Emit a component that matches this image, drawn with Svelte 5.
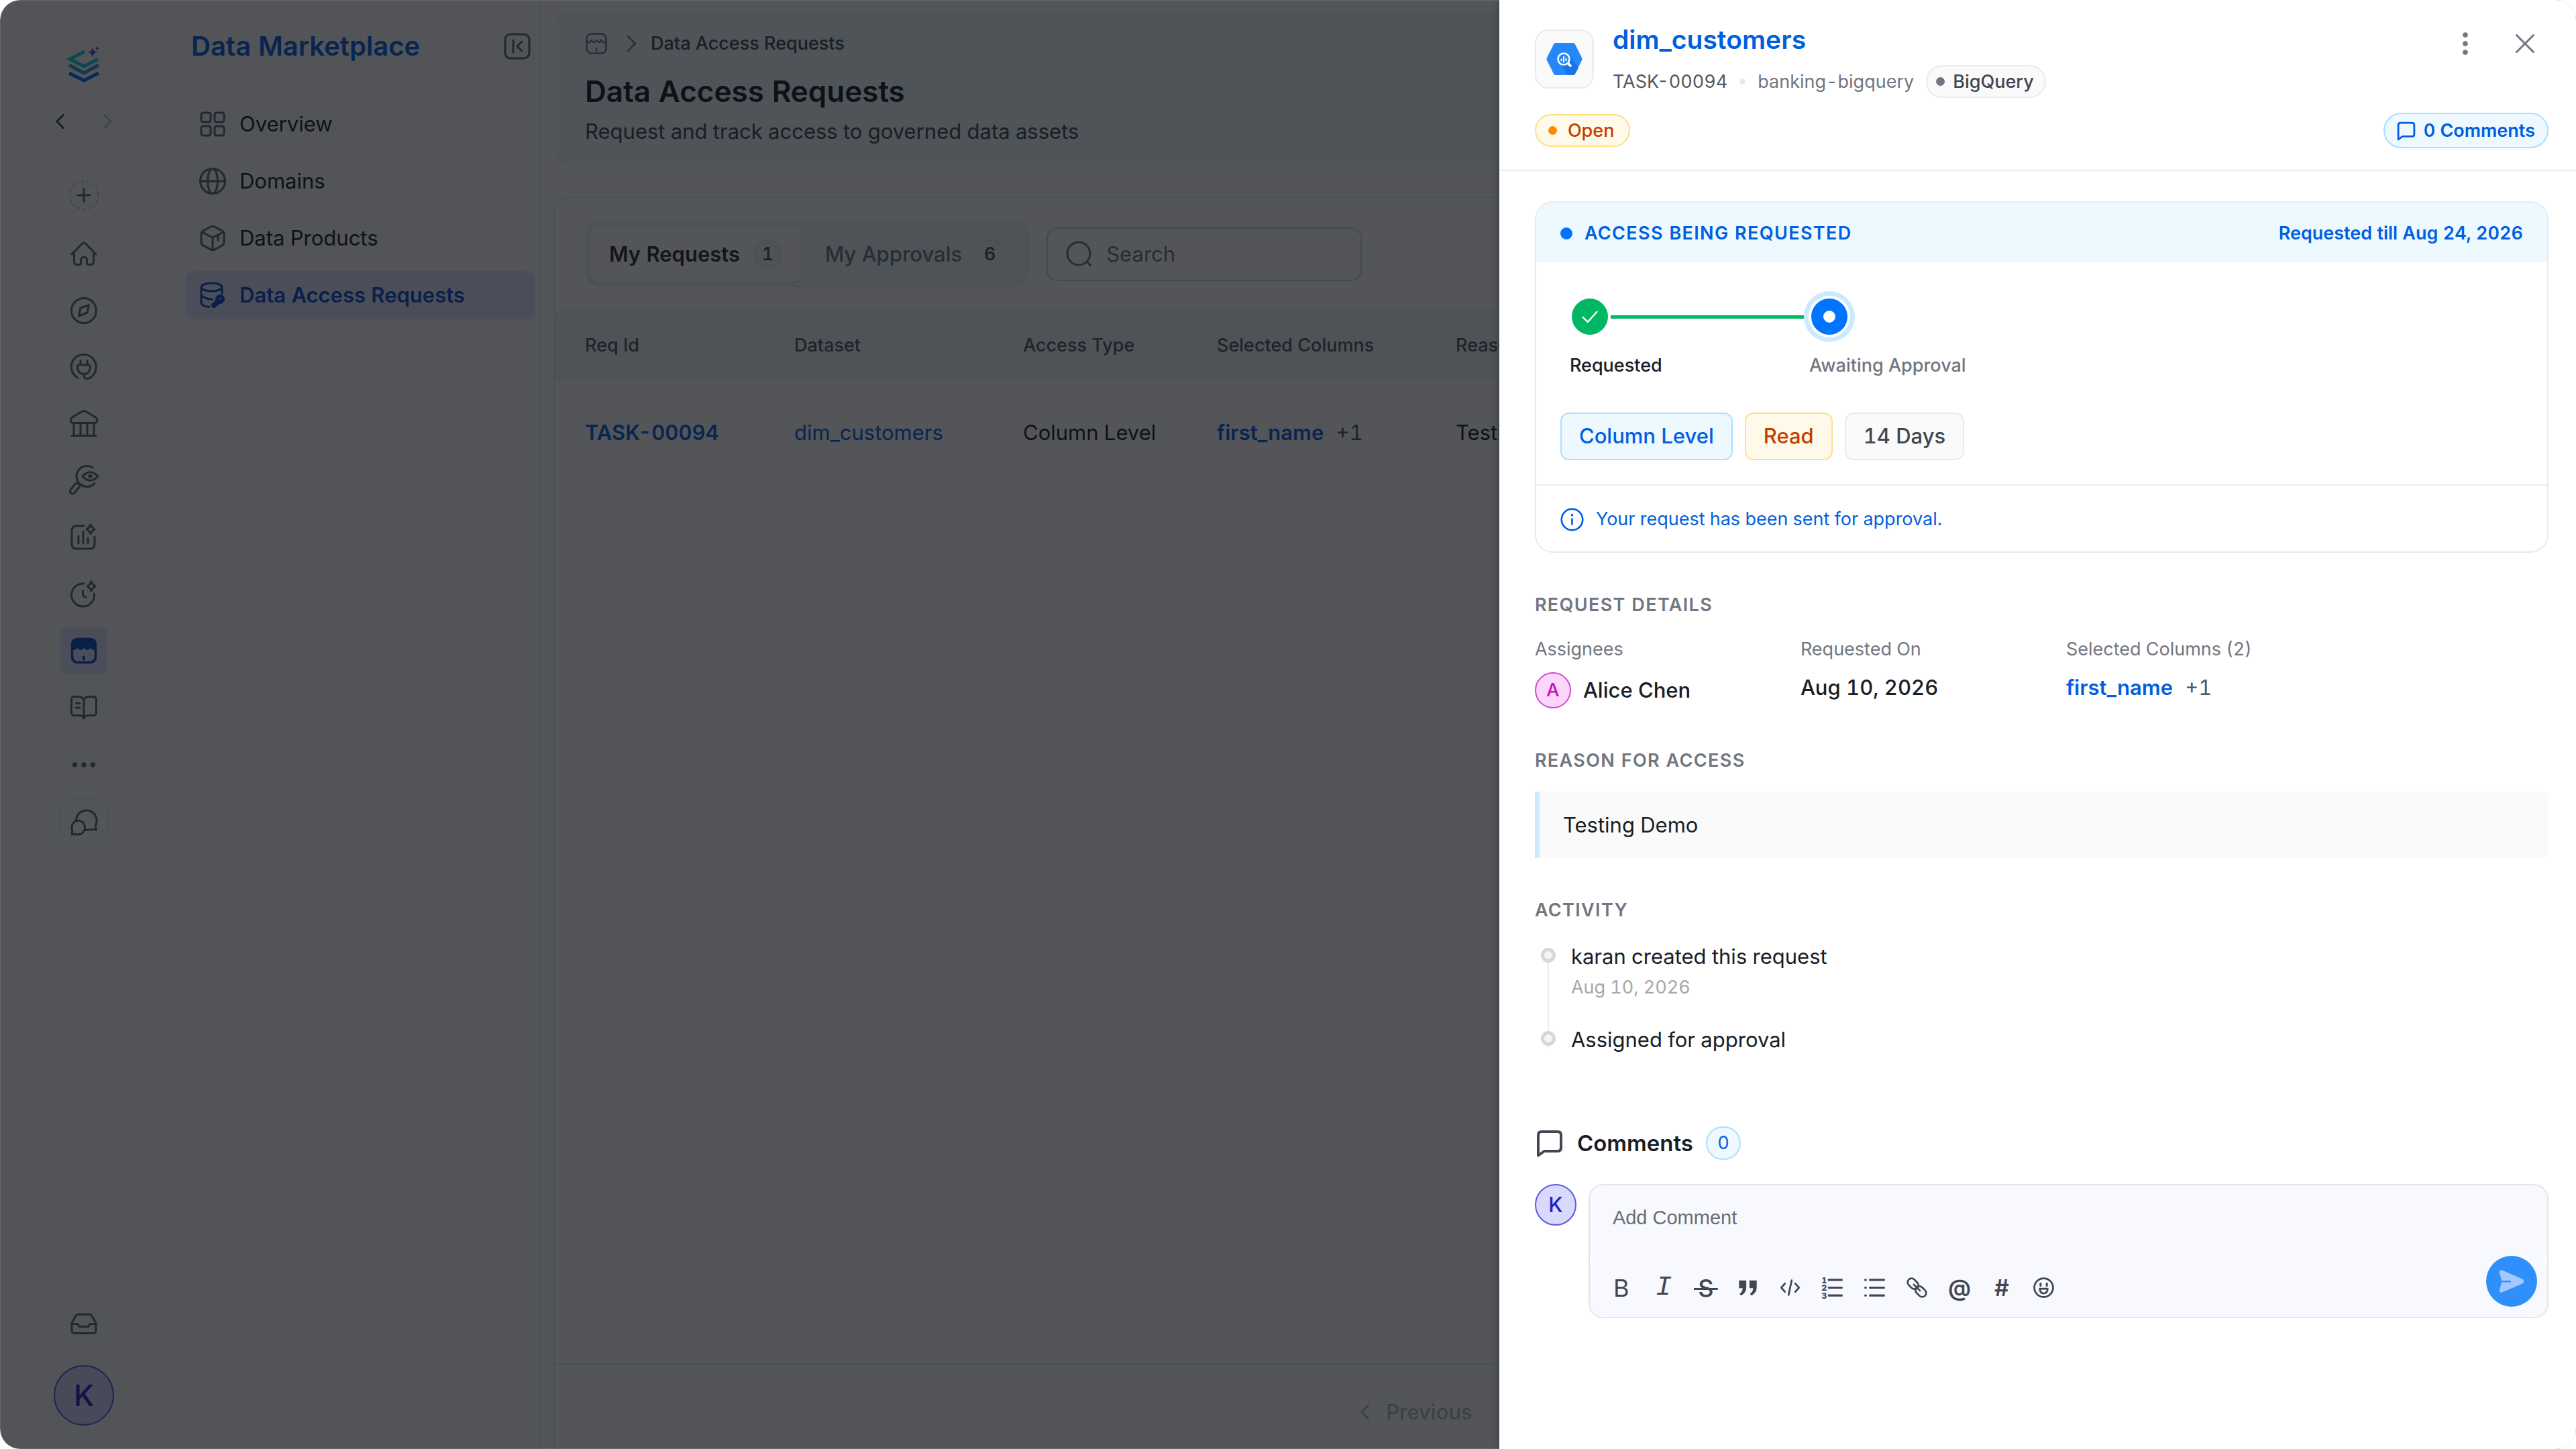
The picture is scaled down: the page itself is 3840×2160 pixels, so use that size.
<script lang="ts">
  type RailItem = { icon: string; label: string };

  const star = (x: number, y: number) =>
    `<path d="M${x} ${y - 7} Q${x + 2} ${y - 2} ${x + 6} ${y} Q${x + 2} ${y + 2} ${x} ${y + 7} Q${x - 2} ${y + 2} ${x - 6} ${y} Q${x - 2} ${y - 2} ${x} ${y - 7} Z"/>`;

  // every icon is drawn on a 40 x 40 grid
  const icons: Record<string, string> = {
    back: `<path d="M26 7 13 20 26 33"/>`,
    forward: `<path d="M14 7 27 20 14 33"/>`,
    plus: `<circle cx="20" cy="20" r="21" stroke-dasharray="2 6" stroke-width="2" opacity=".35"/><path d="M20 11 V29 M11 20 H29"/>`,
    home: `<path d="M2 20 L17 4.5 Q20 1.5 23 4.5 L38 20 M5.5 17 V31 Q5.5 35.5 10 35.5 H13 Q15.5 35.5 15.5 33 V28.5 a4.5 4.5 0 0 1 9 0 V33 Q24.5 35.5 27 35.5 H30 Q34.5 35.5 34.5 31 V17"/>`,
    compass: `<circle cx="20" cy="20" r="18.5"/><path d="M27.5 12 25 23 12.5 28 15 16 Z"/>`,
    plug: `<path d="M11 36.2 A18.5 18.5 0 1 1 27.5 36.8 Q20 40 20 31"/><path d="M15 10.5 V16 M25 10.5 V16 M14 17 H26 Q29.5 17 29.5 20 Q29 30.5 20 30.5 Q11 30.5 10.5 20 Q10.5 17 14 17 Z"/>`,
    bank: `<path d="M17.5 2.2 Q20 .8 22.5 2.2 L36.5 10.5 Q40.5 13 39.8 16.5 Q39 19.5 36 19.5 H4 Q1 19.5 .2 16.5 Q-.5 13 3.5 10.5 Z M5 20 V38 M15 20 V38 M25 20 V38 M35 20 V38 M2 38.5 H38"/>`,
    insights: `<path d="M36 25.5 A15.5 15.5 0 1 1 33 2"/><path d="M18 15 Q29.5 2.5 41 15 Q29.5 27.5 18 15 Z"/><circle cx="29.5" cy="15" r="1.5"/><rect x="3" y="24.5" width="7.5" height="18" rx="3.5" transform="rotate(40 7 33)"/>`,
    chart: `<path d="M20 4 H9 Q2 4 2 11 V31 Q2 38 9 38 H29 Q36 38 36 31 V20 M12 19 V30 M19 12 V30 M26 22 V30"/>${star(30, 9)}`,
    clock: `<path d="M20 5 A17 17 0 1 0 35.5 20 M18.5 15.5 V21 Q18.5 24 23 25.5"/>${star(31, 9)}`,
    market: `<path d="M1 18 V12 Q1 1 12 1 H28 Q39 1 39 12 V18 Q33 20.5 29.5 16 Q25 22 20 16 Q15 22 10.5 16 Q7 20.5 1 18 Z" fill="currentColor" stroke="none"/><path d="M2.5 12 Q2.5 2.5 12 2.5 H28 Q37.5 2.5 37.5 12 V28 Q37.5 37.5 28 37.5 H12 Q2.5 37.5 2.5 28 Z M20 29 V33" stroke-width="3.5"/>`,
    store: `<rect x="3" y="3" width="34" height="34" rx="8"/><path d="M3 16 Q8 21 11.5 14 Q15.5 21 20 14 Q24.5 21 28.5 14 Q32 21 37 16 M20 28 V33"/>`,
    book: `<path d="M20 8 Q17.5 3.5 12 3.5 H6 Q1.5 3.5 1.5 8 V27 Q1.5 31.5 6 31.5 H13 Q18.5 31.5 20 36 Q21.5 31.5 27 31.5 H34 Q38.5 31.5 38.5 27 V8 Q38.5 3.5 34 3.5 H28 Q22.5 3.5 20 8 V36 M8.5 13.5 H14 M8.5 20 H14"/>`,
    more: `<g fill="currentColor" stroke="none"><circle cx="6.5" cy="20" r="3.7"/><circle cx="20" cy="20" r="3.7"/><circle cx="33.5" cy="20" r="3.7"/></g>`,
    chat: `<path d="M8.5 18 A15.3 15.3 0 1 1 38 24 Q37 28 38.5 32.5 Q35 30.8 31 31.8 L22 32.5"/><path d="M2 39 Q3.2 36 2.2 31 A9.8 10.5 0 1 1 16 38 Q12 39.5 8 38.5 Z"/>`,
    inbox: `<path d="M11 6.5 H29 Q31 6.5 32 8.5 L38 19 V30 Q38 34.5 33.5 34.5 H6.5 Q2 34.5 2 30 V19 L8 8.5 Q9 6.5 11 6.5 Z M2.5 20.5 H9 Q12 20.5 13 24.5 H27 Q28 20.5 31 20.5 H37.5"/>`,
    collapse: `<rect x="2" y="2" width="36" height="36" rx="8"/><path d="M14 11 V29 M27 13 20 20 27 27"/>`,
    overview: `<rect x="3" y="3" width="14" height="14" rx="3"/><rect x="23" y="3" width="14" height="14" rx="3"/><rect x="3" y="23" width="14" height="14" rx="3"/><rect x="23" y="23" width="14" height="14" rx="3"/>`,
    globe: `<circle cx="20" cy="20" r="18.5"/><ellipse cx="20" cy="20" rx="7.5" ry="18.5"/><path d="M1.5 20 H38.5"/>`,
    cube: `<path d="M17.5 2.8 Q20 1.5 22.5 2.8 L34 9 Q37 10.8 37 14 V26 Q37 29.2 34 31 L22.5 37.2 Q20 38.5 17.5 37.2 L6 31 Q3 29.2 3 26 V14 Q3 10.8 6 9 Z M4 11 20 19 36 11 M20 19 V38 M28 15 V23"/>`,
    dbkey: `<ellipse cx="18.5" cy="8" rx="15.5" ry="6"/><path d="M3 8 V32 Q5 37 15 37.5 M34 8 V18 M3 20 Q8 26 19 26"/><path d="M22 35 29 29" stroke-width="8"/><circle cx="31" cy="26" r="4.5" stroke-width="5"/>`,
    search: `<circle cx="19" cy="19" r="17"/><path d="M31 31 37 37"/>`,
    dots: `<g fill="currentColor" stroke="none"><circle cx="20" cy="7" r="3.8"/><circle cx="20" cy="20" r="3.8"/><circle cx="20" cy="33" r="3.8"/></g>`,
    close: `<path d="M7.5 7.5 32.5 32.5 M32.5 7.5 7.5 32.5"/>`,
    comment: `<path d="M3 8 Q3 3 8 3 H32 Q37 3 37 8 V27 Q37 32 32 32 H12 L3 38.5 Z"/>`,
    check: `<path d="M7 21 16 30 33 11"/>`,
    info: `<circle cx="20" cy="20" r="18"/><path d="M20 19 V28"/><path d="M20 12 V12.5" stroke-width="4"/>`,
    quote: `<g fill="currentColor" stroke="none"><path d="M3 6 H17 V20 Q17 30 7 35 L4 32 Q10 28 10 21 H3 Z"/><path d="M23 6 H37 V20 Q37 30 27 35 L24 32 Q30 28 30 21 H23 Z"/></g>`,
    code: `<path d="M10 12 3 20 10 28 M30 12 37 20 30 28 M23 6 17 34"/>`,
    bullets: `<path d="M11 5 H38 M11 20 H38 M11 35 H38" stroke-width="4"/><path d="M2 5 H3 M2 20 H3 M2 35 H3" stroke-width="4"/>`,
    link: `<rect x="5" y="1" width="15" height="23" rx="7.5" transform="rotate(-45 12.5 12.5)"/><rect x="20" y="16" width="15" height="23" rx="7.5" transform="rotate(-45 27.5 27.5)"/><path d="M14 14 26 26"/>`,
    smile: `<circle cx="20" cy="20" r="18"/><path d="M14 12 V16 M26 12 V16" stroke-width="4"/><path d="M12.5 22 H27.5 Q27 31 20 31 Q13 31 12.5 22 Z"/>`,
  };

  const railTop: RailItem[] = [
    { icon: "home", label: "Home" },
    { icon: "compass", label: "Discover" },
    { icon: "plug", label: "Connections" },
    { icon: "bank", label: "Governance" },
  ];

  const railBottom: RailItem[] = [
    { icon: "insights", label: "Observability" },
    { icon: "chart", label: "Reports" },
    { icon: "clock", label: "Automations" },
    { icon: "market", label: "Marketplace" },
    { icon: "book", label: "Glossary" },
    { icon: "more", label: "More" },
    { icon: "chat", label: "Chat" },
  ];

  const navItems = [
    { icon: "overview", label: "Overview" },
    { icon: "globe", label: "Domains" },
    { icon: "cube", label: "Data Products" },
    { icon: "dbkey", label: "Data Access Requests" },
  ];

  const columns = ["Req Id", "Dataset", "Access Type", "Selected Columns", "Reason"];

  const activity = [
    { text: "karan created this request", date: "Aug 10, 2026" },
    { text: "Assigned for approval", date: "" },
  ];

  let search = $state("");
  let comment = $state("");
  let activePage = $state("Data Access Requests");
</script>

{#snippet icon(name: string)}
  <svg class="icon" viewBox="0 0 40 40" aria-hidden="true">{@html icons[name]}</svg>
{/snippet}

<div class="app">
  <aside class="rail">
    <svg class="logo" viewBox="0 0 50 54" aria-hidden="true">
      <path d="M26 8 4 19 25 30 46 19" stroke="#10d5e0" />
      <path d="M3 28 25 40 47 28" stroke="#2f9fdc" />
      <path d="M3 40 25 51 47 40" stroke="#006bf0" />
      <path d="M38 1 Q39 8 45 9 Q39 10 38 17 Q37 10 31 9 Q37 8 38 1 Z" fill="#2f5fd8" />
      <path d="M45 0 46 2 48 3 46 4 45 6 44 4 42 3 44 2 Z" fill="#4b3fc8" />
    </svg>
    <div class="history">
      <button aria-label="Back">{@render icon("back")}</button>
      <button aria-label="Forward" disabled>{@render icon("forward")}</button>
    </div>
    <button class="rail-item add" aria-label="Create">{@render icon("plus")}</button>
    <nav class="rail-group">
      {#each railTop as item}
        <a class="rail-item" href="#{item.icon}" aria-label={item.label}>{@render icon(item.icon)}</a>
      {/each}
    </nav>
    <nav class="rail-group lower">
      {#each railBottom as item}
        <a
          class="rail-item"
          class:active={item.icon === "market"}
          class:boxed={item.icon === "chat"}
          href="#{item.icon}"
          aria-label={item.label}>{@render icon(item.icon)}</a
        >
      {/each}
    </nav>
    <a class="rail-item inbox" href="#inbox" aria-label="Inbox">{@render icon("inbox")}</a>
    <button class="avatar large">K</button>
  </aside>

  <aside class="sidebar">
    <div class="sidebar-head">
      <h2>Data Marketplace</h2>
      <button aria-label="Collapse">{@render icon("collapse")}</button>
    </div>
    <nav>
      {#each navItems as item}
        <a
          href="#{item.icon}"
          class:active={activePage === item.label}
          onclick={() => (activePage = item.label)}
        >
          {@render icon(item.icon)}
          {item.label}
        </a>
      {/each}
    </nav>
  </aside>

  <main>
    <header class="page-head">
      <div class="crumbs">
        {@render icon("store")}
        <span class="sep">{@render icon("forward")}</span>
        <span>Data Access Requests</span>
      </div>
      <h1>Data Access Requests</h1>
      <p>Request and track access to governed data assets</p>
    </header>

    <section class="list-card">
      <div class="toolbar">
        <div class="tabs">
          <button class="tab active">My Requests <span class="count">1</span></button>
          <button class="tab">My Approvals <span class="count">6</span></button>
        </div>
        <label class="search">
          {@render icon("search")}
          <input type="text" placeholder="Search" aria-label="Search" bind:value={search} />
        </label>
      </div>

      <table>
        <thead>
          <tr>
            {#each columns as column}
              <th>{column}</th>
            {/each}
          </tr>
        </thead>
        <tbody>
          <tr>
            <td><a class="strong" href="#task">TASK-00094</a></td>
            <td><a href="#dataset">dim_customers</a></td>
            <td>Column Level</td>
            <td><a class="strong" href="#columns">first_name</a> <span class="extra">+1</span></td>
            <td>Testing Demo</td>
          </tr>
        </tbody>
      </table>

      <footer class="pager">
        <button disabled>{@render icon("back")} Previous</button>
      </footer>
    </section>
  </main>

  <div class="overlay"></div>

  <div class="drawer" role="dialog" aria-label="dim_customers">
    <header class="drawer-head">
      <div class="head-row">
        <div class="source">
          <svg viewBox="0 0 54 48" aria-hidden="true">
            <path d="M14 0 H40 Q42 0 43 2 L53 22 Q54 24 53 26 L43 46 Q42 48 40 48 H14 Q12 48 11 46 L1 26 Q0 24 1 22 L11 2 Q12 0 14 0 Z" fill="#2488fb" />
            <path d="M34 17 48 37 43 46 Q42 48 40 48 H32 L21 31 37 35 Z" fill="#1b74e4" />
            <circle cx="26" cy="24" r="8.5" fill="none" stroke="#fff" stroke-width="2.5" />
            <path d="M32 30 37 35" stroke="#fff" stroke-width="3.5" />
            <path d="M22.5 24 V27 M26 20 V29 M29.5 23 V27" stroke="#fff" stroke-width="2" />
          </svg>
        </div>
        <div class="head-text">
          <h2><a href="#dataset">dim_customers</a></h2>
          <div class="meta">
            <span class="task">TASK-00094</span>
            <i></i>
            <span>banking-bigquery</span>
            <span class="pill grey"><b></b>BigQuery</span>
          </div>
        </div>
        <div class="head-actions">
          <button aria-label="More actions">{@render icon("dots")}</button>
          <button aria-label="Close">{@render icon("close")}</button>
        </div>
      </div>
      <div class="status-row">
        <span class="pill amber"><b></b>Open</span>
        <button class="pill blue">{@render icon("comment")}0 Comments</button>
      </div>
    </header>

    <div class="drawer-body">
      <section class="access">
        <div class="access-head">
          <b></b>
          <h3>ACCESS BEING REQUESTED</h3>
          <span>Requested till Aug 24, 2026</span>
        </div>
        <div class="access-body">
          <ol class="steps">
            <li class="done">
              <div class="track"><span class="mark">{@render icon("check")}</span></div>
              Requested
            </li>
            <li>
              <div class="track"><span class="mark current"></span></div>
              Awaiting Approval
            </li>
          </ol>
          <div class="tags">
            <span class="tag blue">Column Level</span>
            <span class="tag amber">Read</span>
            <span class="tag grey">14 Days</span>
          </div>
        </div>
        <p class="note">{@render icon("info")} Your request has been sent for approval.</p>
      </section>

      <section class="block">
        <h3>REQUEST DETAILS</h3>
        <dl>
          <div>
            <dt>Assignees</dt>
            <dd><span class="avatar small">A</span>Alice Chen</dd>
          </div>
          <div>
            <dt>Requested On</dt>
            <dd>Aug 10, 2026</dd>
          </div>
          <div>
            <dt>Selected Columns (2)</dt>
            <dd><a class="strong" href="#columns">first_name</a><span class="extra">+1</span></dd>
          </div>
        </dl>
      </section>

      <section class="block">
        <h3>REASON FOR ACCESS</h3>
        <blockquote>Testing Demo</blockquote>
      </section>

      <section class="block">
        <h3>ACTIVITY</h3>
        <ul class="activity">
          {#each activity as entry}
            <li>
              <span class="dot"></span>
              <div>
                <p>{entry.text}</p>
                {#if entry.date}
                  <time>{entry.date}</time>
                {/if}
              </div>
            </li>
          {/each}
        </ul>
      </section>

      <section class="comments">
        <h2>{@render icon("comment")} Comments <span>0</span></h2>
        <div class="composer">
          <span class="avatar">K</span>
          <div class="editor">
            <textarea placeholder="Add Comment" aria-label="Add Comment" bind:value={comment}></textarea>
            <div class="tools">
              <button aria-label="Bold">B</button>
              <button class="italic" aria-label="Italic">I</button>
              <button class="strike" aria-label="Strikethrough"><s>&thinsp;S&thinsp;</s></button>
              <button aria-label="Quote">{@render icon("quote")}</button>
              <button aria-label="Code">{@render icon("code")}</button>
              <button aria-label="Numbered list">
                <svg class="icon" viewBox="0 0 40 40" aria-hidden="true">
                  <path d="M13 5 H38 M13 20 H38 M13 35 H38" stroke-width="4" />
                  <g class="digits"><text x="-1" y="11">1</text><text x="-1" y="26">2</text><text x="-1" y="41">3</text></g>
                </svg>
              </button>
              <button aria-label="Bulleted list">{@render icon("bullets")}</button>
              <button aria-label="Link">{@render icon("link")}</button>
              <button class="sign" aria-label="Mention">@</button>
              <button class="sign" aria-label="Tag">#</button>
              <button aria-label="Emoji">{@render icon("smile")}</button>
            </div>
            <button class="send" aria-label="Send">
              <svg viewBox="0 0 40 36" aria-hidden="true">
                <path d="M2 5 Q1 0 6 1.5 L36 14.5 Q41 18 36 21.5 L6 34.5 Q1 36 2 31 L5 19.5 H19 V17 H5 Z" fill="#a2c8ff" />
              </svg>
            </button>
          </div>
        </div>
      </section>
    </div>
  </div>
</div>

<style>
  :global(body) {
    background: #fff;
  }

  .app {
    --blue: #005fe0;
    --line: #e9eaeb;
    --grey: #717680;
    --text: #181d27;
    display: grid;
    grid-template-columns: 250px 557px 1fr;
    position: relative;
    min-height: 100vh;
    border-radius: 30px;
    overflow: hidden;
    background: #fff;
    color: var(--text);
    font: 400 31px/46px Inter, sans-serif;
    font-variant-numeric: tabular-nums;
  }

  .app *,
  .app *::before {
    box-sizing: border-box;
  }

  h1,
  h2,
  h3,
  p,
  ol,
  ul,
  dl,
  dd,
  blockquote {
    margin: 0;
    padding: 0;
    list-style: none;
  }

  button {
    display: flex;
    align-items: center;
    justify-content: center;
    padding: 0;
    border: 0;
    background: none;
    color: inherit;
    font: inherit;
    font-variant-numeric: inherit;
    cursor: pointer;
  }

  a {
    color: var(--blue);
    text-decoration: none;
  }

  .strong {
    font-weight: 600;
  }

  .extra {
    color: #535862;
    margin-left: 10px;
  }

  .icon {
    flex: none;
    width: 40px;
    height: 40px;
    overflow: visible;
    fill: none;
    stroke: currentColor;
    stroke-width: 3;
    stroke-linecap: round;
    stroke-linejoin: round;
  }

  /* Icon rail */
  .rail {
    display: flex;
    flex-direction: column;
    align-items: center;
    padding: 69px 0 35px;
    background: #fafafa;
    color: #5b6873;
  }

  .logo {
    width: 50px;
    height: 54px;
    fill: none;
    stroke-width: 5;
  }

  .history {
    display: flex;
    gap: 40px;
    margin: 42px 0 59px;
    color: #414651;
  }

  .history button {
    height: 32px;
  }

  .history .icon {
    width: 30px;
    height: 40px;
    stroke-width: 4;
  }

  .history button:disabled {
    color: #c4c8cc;
  }

  .rail-item {
    display: flex;
    align-items: center;
    justify-content: center;
    width: 70px;
    height: 70px;
    border-radius: 10px;
    color: inherit;
  }

  .add {
    margin-bottom: 18px;
  }

  .rail-group {
    display: flex;
    flex-direction: column;
    gap: 14px;
  }

  .lower {
    gap: 15px;
    margin-top: 14px;
  }

  .rail-item.active {
    background: #e3e8fb;
    color: #0a4bc8;
  }

  .boxed {
    border: 2px solid #ebf2f2;
    border-radius: 18px;
    background: #fff;
  }

  .inbox {
    margin-top: auto;
    margin-bottom: 27px;
  }

  .avatar {
    display: flex;
    flex: none;
    align-items: center;
    justify-content: center;
    width: 62px;
    height: 62px;
    border: 2px solid #5c5ae0;
    border-radius: 50%;
    background: #d9d8ff;
    color: #2420bd;
    font-weight: 500;
  }

  .avatar.large {
    width: 90px;
    height: 90px;
    font-size: 44px;
  }

  .avatar.small {
    width: 54px;
    height: 54px;
    border-color: #d04bcb;
    background: #fdd5fd;
    color: #c010b8;
    font-size: 27px;
  }

  /* Marketplace navigation */
  .sidebar {
    border-right: 2px solid #e2e5e7;
    background: #fafafa;
  }

  .sidebar-head {
    display: flex;
    align-items: center;
    justify-content: space-between;
    padding: 41px 14px 52px 35px;
    color: #5b6873;
  }

  .sidebar-head h2 {
    color: var(--blue);
    font-size: 40px;
    font-weight: 600;
    line-height: 56px;
  }

  .sidebar nav {
    display: grid;
    gap: 13px;
    padding: 0 7px 0 27px;
  }

  .sidebar nav a {
    display: flex;
    align-items: center;
    gap: 20px;
    height: 72px;
    padding-left: 20px;
    border-radius: 13px;
    color: var(--text);
  }

  .sidebar nav .icon {
    color: #5b6873;
  }

  .sidebar nav .active,
  .sidebar nav .active .icon {
    background: #e3e8fb;
    color: #0a4bc8;
    font-weight: 600;
  }

  /* Requests page */
  main {
    display: flex;
    flex-direction: column;
    min-width: 0;
    padding: 16px 0 0 18px;
  }

  .page-head {
    height: 232px;
    padding: 29px 47px;
    border-radius: 26px 0 0 26px;
    background: #eefafb;
  }

  .crumbs {
    display: flex;
    align-items: center;
    color: #414651;
    font-size: 27px;
    font-weight: 500;
    line-height: 40px;
  }

  .crumbs .icon {
    width: 34px;
    height: 34px;
    color: #717f88;
  }

  .sep {
    display: flex;
    margin: 0 12px 0 18px;
  }

  h1 {
    margin-top: 21px;
    font-size: 44px;
    font-weight: 600;
    line-height: 60px;
  }

  .page-head p {
    margin-top: 7px;
    color: #414651;
  }

  .list-card {
    display: flex;
    flex: 1;
    flex-direction: column;
    margin-top: 45px;
    border: 2px solid #e5eeee;
    border-width: 2px 0 0 2px;
    border-radius: 27px 0 0 0;
  }

  .toolbar {
    display: flex;
    align-items: center;
    gap: 27px;
    padding: 35px 45px 36px;
  }

  .tabs {
    display: flex;
    gap: 8px;
    padding: 6px;
    border: 2px solid #e5eeee;
    border-radius: 22px;
    background: #eef8f8;
  }

  .tab {
    gap: 20px;
    height: 82px;
    padding: 0 28px;
    border-radius: 13px;
    color: #717680;
    font-weight: 500;
  }

  .tab.active {
    background: #fff;
    box-shadow: 0 2px 5px rgba(10, 13, 18, 0.12);
    color: #252b37;
    font-weight: 600;
  }

  .count {
    width: 43px;
    border: 2px solid #e5eeee;
    border-radius: 22px;
    background: #eef8f8;
    color: #414651;
    font-size: 27px;
    font-weight: 500;
    line-height: 40px;
  }

  .search {
    display: flex;
    align-items: center;
    gap: 20px;
    width: 470px;
    height: 80px;
    padding: 0 27px;
    border: 2px solid #d0d5d8;
    border-radius: 16px;
    color: #717680;
  }

  .search input {
    min-width: 0;
    width: 100%;
    padding: 0;
    border: 0;
    outline: 0;
    background: none;
    font: inherit;
  }

  .search input::placeholder {
    color: #717680;
    opacity: 1;
  }

  table {
    width: 100%;
    border-collapse: collapse;
    table-layout: fixed;
    text-align: left;
    white-space: nowrap;
  }

  th {
    height: 99px;
    padding: 0 0 0 45px;
    border: solid #e5eeee;
    border-width: 2px 0;
    background: #eef8f8;
    color: #535862;
    font-size: 27px;
    font-weight: 500;
  }

  th:nth-child(1) {
    width: 312px;
  }

  th:nth-child(2) {
    width: 341px;
  }

  th:nth-child(3) {
    width: 289px;
  }

  th:nth-child(4) {
    width: 356px;
  }

  td {
    height: 160px;
    padding: 0 0 0 45px;
  }

  .pager {
    display: flex;
    align-items: center;
    height: 128px;
    margin-top: auto;
    padding: 16px 0 0 39.6%;
    border-top: 2px solid #e5eeee;
  }

  .pager button {
    gap: 16px;
    color: #b4bac0;
    font-weight: 500;
  }

  .pager .icon {
    width: 30px;
    height: 36px;
    stroke-width: 4;
  }

  .overlay {
    position: absolute;
    inset: 0;
    border-radius: 30px;
    background: rgba(10, 13, 18, 0.7);
    box-shadow: inset 0 0 0 1px rgba(255, 255, 255, 0.12);
  }

  /* Request drawer */
  .drawer {
    position: absolute;
    inset: 0 0 0 auto;
    width: 41.8vw;
    background: #fff;
    box-shadow: 0 0 12px rgba(10, 13, 18, 0.35);
  }

  .drawer-head {
    padding: 35px 41px 32px 53px;
    border-bottom: 2px solid var(--line);
  }

  .head-row {
    display: flex;
    align-items: flex-start;
    gap: 28px;
  }

  .source {
    display: flex;
    align-items: center;
    justify-content: center;
    width: 88px;
    height: 88px;
    margin-top: 9px;
    border: 2px solid var(--line);
    border-radius: 20px;
    background: #fafafa;
  }

  .source svg {
    width: 54px;
    height: 48px;
  }

  .head-text {
    flex: 1;
  }

  .head-text h2 {
    font-size: 39px;
    font-weight: 600;
    line-height: 48px;
  }

  .meta {
    display: flex;
    align-items: center;
    gap: 18px;
    margin-top: 14px;
    color: var(--grey);
    font-size: 27px;
  }

  .meta i {
    width: 9px;
    height: 9px;
    border-radius: 50%;
    background: var(--line);
  }

  .task {
    color: #535862;
  }

  .pill {
    display: flex;
    align-items: center;
    gap: 12px;
    height: 49px;
    padding: 0 17px;
    border: 2px solid;
    border-radius: 27px;
    font-size: 27px;
    font-weight: 500;
    line-height: 40px;
  }

  .pill b {
    width: 13px;
    height: 13px;
    border-radius: 50%;
    background: #717680;
  }

  .grey {
    border-color: var(--line);
    background: #fafafa;
    color: #414651;
  }

  .pill.grey {
    padding: 0 16px 0 13px;
  }

  .amber {
    border-color: #ffdf82;
    background: #fff9e9;
    color: #c43e00;
  }

  .pill.amber {
    gap: 16px;
    padding: 0 22px 0 18px;
  }

  .pill.amber b {
    background: #ff8b00;
  }

  .blue {
    border-color: #a8e0ff;
    background: #edf8ff;
    color: var(--blue);
  }

  .pill.blue {
    height: 53px;
    padding: 0 18px;
    font-weight: 600;
  }

  .pill .icon {
    width: 28px;
    height: 28px;
    stroke-width: 4;
  }

  .head-actions {
    display: flex;
    gap: 19px;
    color: var(--grey);
  }

  .head-actions button {
    width: 70px;
    height: 60px;
  }

  .status-row {
    display: flex;
    align-items: center;
    justify-content: space-between;
    margin-top: 22px;
  }

  .drawer-body {
    padding: 45px 41px 45px 53px;
  }

  .access {
    border: 2px solid var(--line);
    border-radius: 27px;
    overflow: hidden;
  }

  .access-head {
    display: flex;
    align-items: center;
    gap: 18px;
    height: 89px;
    padding: 2px 36px 0;
    background: #edf8ff;
    color: var(--blue);
    font-size: 27px;
    font-weight: 600;
  }

  .access-head b {
    width: 18px;
    height: 18px;
    border-radius: 50%;
    background: #0073ff;
  }

  h3 {
    font-size: 27px;
    font-weight: 600;
    letter-spacing: 0.05em;
    line-height: 42px;
  }

  .access-head span {
    margin-left: auto;
  }

  .access-body {
    padding: 54px 36px 36px;
  }

  .steps {
    display: flex;
    margin-left: 14px;
  }

  .steps li {
    width: 357px;
    color: var(--grey);
    font-size: 27px;
    font-weight: 500;
    line-height: 40px;
  }

  .steps .done {
    color: var(--text);
  }

  .track {
    display: flex;
    align-items: center;
    gap: 4px;
    margin: 0 0 26px 3px;
  }

  .done .track {
    margin-right: -3px;
  }

  .done .track::after {
    content: "";
    flex: 1;
    height: 5px;
    background: #00b763;
  }

  .mark {
    display: flex;
    align-items: center;
    justify-content: center;
    width: 54px;
    height: 54px;
    border-radius: 50%;
    background: #00b763;
    color: #fff;
  }

  .mark .icon {
    width: 32px;
    height: 32px;
  }

  .mark.current {
    position: relative;
    border: 18px solid #0073ff;
    background: #fff;
    box-shadow: 0 0 0 4px #fff, 0 0 0 11px #cceaff;
  }

  .tags {
    display: flex;
    gap: 18px;
    margin-top: 50px;
  }

  .tag {
    padding: 10px 26px 11px;
    border: 2px solid;
    border-radius: 13px;
    font-weight: 500;
  }

  .tag.grey {
    border-color: var(--line);
  }

  .tag.amber {
    border-color: #ffdf82;
  }

  .tag.blue {
    border-color: #a8e0ff;
  }

  .note {
    display: flex;
    align-items: center;
    gap: 18px;
    height: 100px;
    padding: 2px 36px 0;
    border-top: 2px solid var(--line);
    color: var(--blue);
    font-size: 27px;
  }

  .note .icon {
    width: 35px;
    height: 35px;
  }

  .block {
    margin-top: 57px;
  }

  .block h3 {
    margin-bottom: 25px;
    color: var(--grey);
  }

  dl {
    display: flex;
  }

  dl div {
    width: 396px;
  }

  dt {
    margin-bottom: 14px;
    color: var(--grey);
    font-size: 27px;
    line-height: 40px;
  }

  dd {
    display: flex;
    align-items: center;
    font-weight: 500;
  }

  dd .small {
    margin-right: 18px;
  }

  dd .extra {
    margin-left: 18px;
    font-weight: 400;
  }

  blockquote {
    padding: 27px 37px 26px 35px;
    border-left: 7px solid #cceaff;
    border-radius: 0 9px 9px 0;
    background: #fafafa;
  }

  .activity li {
    display: flex;
    position: relative;
    gap: 23px;
    padding: 0 0 35px 9px;
  }

  .activity li:last-child {
    padding-bottom: 0;
  }

  .activity li::before {
    content: "";
    position: absolute;
    inset: 10px auto -10px 19px;
    width: 2px;
    background: #e9e9f4;
  }

  .activity li:last-child::before {
    bottom: 10px;
  }

  .dot {
    position: relative;
    width: 22px;
    height: 22px;
    margin-top: 10px;
    border: 5px solid #d5d7da;
    border-radius: 50%;
    background: #f5f5f5;
  }

  time {
    display: block;
    margin-top: 3px;
    color: #a4a7ae;
    font-size: 27px;
    line-height: 40px;
  }

  .comments {
    margin-top: 106px;
  }

  .comments h2 {
    display: flex;
    align-items: center;
    gap: 19px;
    font-size: 33px;
    font-weight: 600;
    line-height: 50px;
  }

  .comments h2 .icon {
    width: 44px;
    height: 40px;
    color: #414651;
    stroke-width: 4;
  }

  .comments h2 span {
    width: 52px;
    border: 2px solid #a8e0ff;
    border-radius: 26px;
    background: #edf8ff;
    color: var(--blue);
    font-size: 27px;
    font-weight: 400;
    line-height: 46px;
    text-align: center;
  }

  .composer {
    display: flex;
    gap: 18px;
    margin-top: 36px;
  }

  .editor {
    position: relative;
    flex: 1;
    border: 2px solid #e5e5e5;
    border-radius: 22px;
    overflow: hidden;
  }

  textarea {
    display: block;
    width: 100%;
    height: 107px;
    padding: 27px 34px;
    border: 0;
    outline: 0;
    background: #f8f9fe;
    font: 400 29px/42px "Liberation Sans", Arial, sans-serif;
    resize: none;
  }

  textarea::placeholder {
    color: #6a6d74;
  }

  .tools {
    display: flex;
    align-items: center;
    gap: 27px;
    height: 89px;
    padding: 2px 29px 0;
    border-radius: 13px;
    background: #f8f9fe;
    color: #414651;
  }

  .tools button {
    width: 36px;
    height: 40px;
    font-size: 36px;
  }

  .tools .icon {
    width: 31px;
    height: 31px;
    stroke-width: 3.5px;
  }

  .tools .italic {
    font-family: "Liberation Mono", monospace;
    font-size: 40px;
    font-style: italic;
  }

  .tools .strike {
    font-weight: 500;
  }

  .tools .sign {
    font-size: 34px;
    font-weight: 600;
  }

  .digits {
    fill: currentColor;
    stroke: none;
    font-size: 16px;
    font-weight: 800;
  }

  .send {
    position: absolute;
    right: 15px;
    bottom: 15px;
    width: 76px;
    height: 76px;
    border-radius: 50%;
    background: #2f8ffb;
  }

  .send svg {
    width: 40px;
    height: 36px;
  }
</style>
